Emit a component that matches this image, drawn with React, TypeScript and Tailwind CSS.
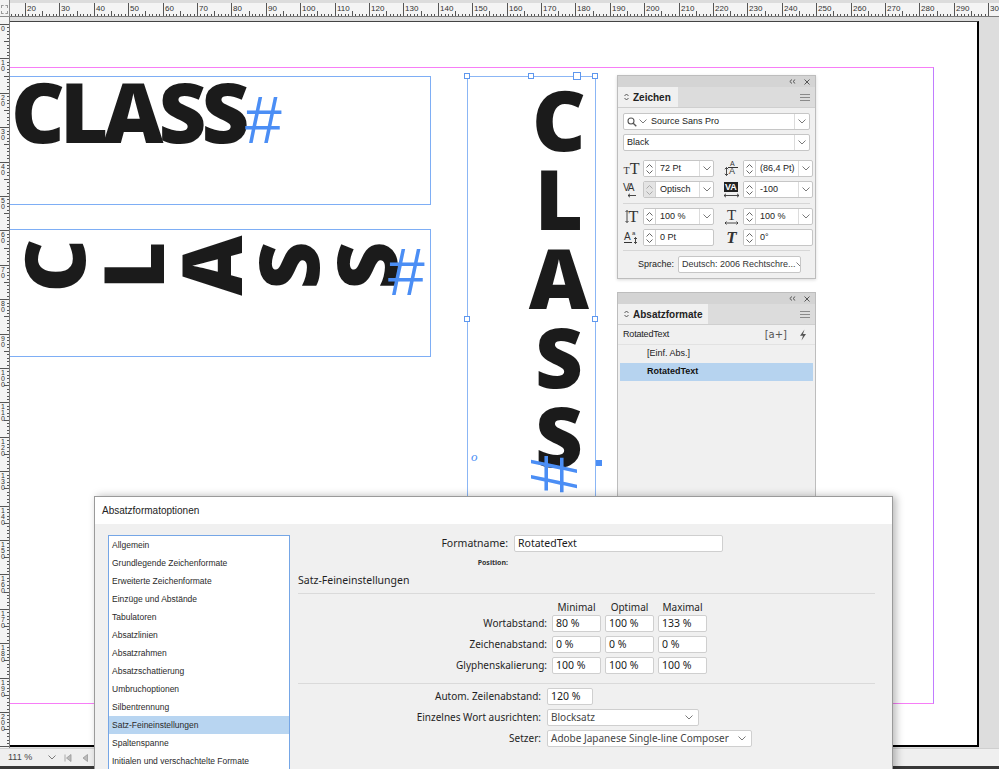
import React from "react";

const H_TICKS = Array.from({ length: 301 }, (_, v) => v).filter((v) => -53.8 + v * 3.44 > -1);
const V_TICKS = Array.from({ length: 215 }, (_, v) => v);

function Chevron({ className = "" }: { className?: string }) {
  return (
    <svg width="8" height="5" viewBox="0 0 8 5" className={`shrink-0 ${className}`}>
      <path d="M0.5 0.5 L4 4 L7.5 0.5" fill="none" stroke="#7a7a7a" strokeWidth="1" />
    </svg>
  );
}

function TopRuler() {
  return (
    <div className="flex h-[17px] shrink-0 bg-[#dcdcdc]">
      <div className="h-full w-[10px] border-r border-b border-[#8a8a8a] bg-[#f2f2f2] pt-[5px]">
        <div className="mx-[1px] h-[9px] border border-dashed border-[#9a9a9a]" />
      </div>
      <div className="relative mt-[3px] flex-1 overflow-hidden border-b border-[#7a7a7a] bg-[#f4f4f4]">
        <svg width="989" height="13" className="absolute left-0 top-0">
          {H_TICKS.map((v) => {
            const x = Math.round(-53.8 + v * 3.44) + 0.5;
            const h = v % 10 === 0 ? 13 : v % 5 === 0 ? 5 : 2;
            return <line key={v} x1={x} x2={x} y1={13 - h} y2={13} stroke="#555" strokeWidth="1" />;
          })}
        </svg>
        {H_TICKS.filter((v) => v % 10 === 0).map((v) => (
          <span
            key={v}
            className="absolute top-[1px] text-[8px] leading-[9px] text-[#333]"
            style={{ left: Math.round(-53.8 + v * 3.44) + 2 }}
          >
            {v}
          </span>
        ))}
      </div>
    </div>
  );
}

function LeftRuler() {
  return (
    <div className="relative w-[10px] shrink-0 overflow-hidden border-r border-[#7a7a7a] bg-[#f4f4f4]">
      <svg width="10" height="731" className="absolute left-0 top-0">
        {V_TICKS.map((v) => {
          const y = Math.round(7 + v * 3.44) + 0.5;
          const w = v % 10 === 0 ? 9 : v % 5 === 0 ? 5 : 2;
          return <line key={v} x1={9 - w} x2={9} y1={y} y2={y} stroke="#555" strokeWidth="1" />;
        })}
      </svg>
      {V_TICKS.filter((v) => v % 10 === 0).map((v) => (
        <div
          key={v}
          className="absolute left-[1px] flex flex-col text-[7px] leading-[6px] text-[#333]"
          style={{ top: Math.round(7 + v * 3.44) + 2 }}
        >
          {String(v)
            .split("")
            .map((d, i) => (
              <span key={i}>{d}</span>
            ))}
        </div>
      ))}
    </div>
  );
}

function Handle({ className }: { className: string }) {
  return <div className={`absolute border border-[#5e97ee] bg-white ${className}`} />;
}

function Page() {
  const big = "font-['Open_Sans',sans-serif] font-extrabold text-[83px] text-[#1b1b1b]";
  const hash = "font-['Liberation_Sans',Arial,sans-serif] text-[66px] leading-none text-[#4b8ef5]";
  return (
    <div className="relative mt-[4px] h-[726px] w-[969px] overflow-hidden border-t border-r-2 border-b-2 border-t-[#444] border-r-black border-b-black bg-white">
      {/* margin guides */}
      <div className="absolute left-[-10px] top-[45px] h-[637px] w-[934px] border-t border-b border-r border-t-[#f77df7] border-b-[#f77df7] border-r-[#c07cff]" />

      {/* frame 1 */}
      <div className="absolute left-[-10px] top-[54px] h-[129px] w-[431px] border border-[#7eaef5]">
        <span className={`absolute left-[10px] top-[-8px] leading-none tracking-[-0.06em] ${big}`}>CLASS</span>
        <span className={`absolute left-[244px] top-[10px] ${hash}`}>#</span>
      </div>

      {/* frame 2 */}
      <div className="absolute left-[-10px] top-[207px] h-[128px] w-[431px] border border-[#7eaef5]">
        <div className="absolute left-[13px] top-[-4px] flex">
          {["C", "L", "A", "S", "S"].map((c, i) => (
            <div key={i} className="flex h-[78px] w-[78px] items-center justify-center">
              <span className={`inline-block -rotate-90 leading-[83px] ${big}`}>{c}</span>
            </div>
          ))}
        </div>
        <span className={`absolute left-[387px] top-[9px] ${hash}`}>#</span>
      </div>

      {/* frame 3 (selected) */}
      <div className="absolute left-[457px] top-[54px] h-[520px] w-[129px] border border-[#8bb6f5]">
        <div className="absolute left-[52px] top-[2px] flex w-[78px] flex-col items-center">
          {["C", "L", "A", "S", "S"].map((c, i) => (
            <span key={i} className={`leading-[79px] ${big}`}>
              {c}
            </span>
          ))}
        </div>
        <span className={`absolute left-[68px] top-[364px] inline-block rotate-90 ${hash}`}>#</span>
        <span className="absolute left-[3px] top-[373px] font-['Liberation_Serif',serif] text-[13px] italic leading-none text-[#4b8ef5]">
          o
        </span>
        <div className="absolute left-[128px] top-[383px] h-[6px] w-[6px] bg-[#4b8ef5]" />
      </div>
      <Handle className="left-[454px] top-[51px] h-[6px] w-[6px]" />
      <Handle className="left-[518px] top-[51px] h-[6px] w-[6px]" />
      <Handle className="left-[563px] top-[50px] h-[8px] w-[8px]" />
      <Handle className="left-[582px] top-[51px] h-[6px] w-[6px]" />
      <Handle className="left-[454px] top-[294px] h-[6px] w-[6px]" />
      <Handle className="left-[582px] top-[294px] h-[6px] w-[6px]" />
    </div>
  );
}

function PanelHeader() {
  return (
    <div className="flex h-[11px] items-center justify-end gap-[8px] bg-[#d4d4d4] pr-[5px]">
      <svg width="7" height="5" viewBox="0 0 7 5">
        <path d="M3 0.5 L0.8 2.5 L3 4.5 M6.2 0.5 L4 2.5 L6.2 4.5" fill="none" stroke="#555" strokeWidth="1" />
      </svg>
      <svg width="6" height="6" viewBox="0 0 6 6">
        <path d="M0.5 0.5 L5.5 5.5 M5.5 0.5 L0.5 5.5" stroke="#555" strokeWidth="1" />
      </svg>
    </div>
  );
}

function UpDown() {
  return (
    <svg width="5" height="8" viewBox="0 0 5 8">
      <path d="M0.5 3 L2.5 1 L4.5 3 M0.5 5 L2.5 7 L4.5 5" fill="none" stroke="#444" strokeWidth="0.9" />
    </svg>
  );
}

function Hamburger() {
  return (
    <div className="flex w-[10px] flex-col gap-[2px]">
      <div className="h-px bg-[#8a8a8a]" />
      <div className="h-px bg-[#8a8a8a]" />
      <div className="h-px bg-[#8a8a8a]" />
    </div>
  );
}

function PanelTabs({ title, tabW }: { title: string; tabW: string }) {
  return (
    <div className="flex h-[21px] items-stretch border-b border-[#cfcfcf] bg-[#dcdcdc]">
      <div className={`flex items-center gap-[4px] bg-[#f0f0f0] pl-[6px] ${tabW}`}>
        <UpDown />
        <span className="text-[10px] font-bold text-[#222]">{title}</span>
      </div>
      <div className="flex flex-1 items-center justify-end pr-[5px]">
        <Hamburger />
      </div>
    </div>
  );
}

function Spinner({ disabled = false }: { disabled?: boolean }) {
  return (
    <div
      className={`flex h-full w-[12px] shrink-0 flex-col items-center justify-center gap-[2px] border-r border-[#d2d2d2] ${
        disabled ? "bg-[#e4e4e4]" : "bg-white"
      }`}
    >
      <svg width="7" height="4" viewBox="0 0 7 4">
        <path d="M0.5 3.5 L3.5 0.5 L6.5 3.5" fill="none" stroke={disabled ? "#aaa" : "#666"} />
      </svg>
      <svg width="7" height="4" viewBox="0 0 7 4">
        <path d="M0.5 0.5 L3.5 3.5 L6.5 0.5" fill="none" stroke={disabled ? "#aaa" : "#666"} />
      </svg>
    </div>
  );
}

function SpinField({
  value,
  className,
  chevron = true,
  disabled = false,
}: {
  value: string;
  className: string;
  chevron?: boolean;
  disabled?: boolean;
}) {
  return (
    <div className={`flex h-[17px] shrink-0 overflow-hidden rounded-[2px] border border-[#c6c6c6] bg-white ${className}`}>
      <Spinner disabled={disabled} />
      <span className="flex flex-1 items-center whitespace-nowrap pl-[4px] text-[9px] text-[#222]">{value}</span>
      {chevron && (
        <span className="flex w-[14px] items-center justify-center border-l border-[#dcdcdc]">
          <Chevron />
        </span>
      )}
    </div>
  );
}

function Icon({ children }: { children: React.ReactNode }) {
  return <div className="flex h-[17px] w-[17px] shrink-0 items-center justify-center text-[#333]">{children}</div>;
}

function ZeichenPanel() {
  const serif = "font-['Liberation_Serif',serif]";
  return (
    <div className="absolute left-[617px] top-[75px] h-[204px] w-[199px] border border-[#bdbdbd] bg-[#f0f0f0] shadow-[0_1px_3px_rgba(0,0,0,0.15)]">
      <PanelHeader />
      <PanelTabs title="Zeichen" tabW="w-[60px]" />
      <div className="px-[5px] pt-[5px]">
        <div className="flex h-[17px] overflow-hidden rounded-[2px] border border-[#c6c6c6] bg-white">
          <span className="flex flex-1 items-center gap-[2px] pl-[3px] text-[9px] text-[#222]">
            <svg width="10" height="10" viewBox="0 0 10 10">
              <circle cx="4" cy="4" r="3" fill="none" stroke="#555" strokeWidth="1.1" />
              <path d="M6.2 6.2 L9.3 9.3" stroke="#555" strokeWidth="1.3" />
            </svg>
            <Chevron className="mr-[2px]" />
            Source Sans Pro
          </span>
          <span className="flex w-[15px] items-center justify-center border-l border-[#dcdcdc]">
            <Chevron />
          </span>
        </div>
        <div className="mt-[4px] flex h-[17px] overflow-hidden rounded-[2px] border border-[#c6c6c6] bg-white">
          <span className="flex flex-1 items-center pl-[3px] text-[9px] text-[#222]">Black</span>
          <span className="flex w-[15px] items-center justify-center border-l border-[#dcdcdc]">
            <Chevron />
          </span>
        </div>

        <div className="mt-[9px] flex flex-col gap-[4px]">
          <div className="flex items-center">
            <Icon>
              <span className={`${serif} leading-none`}>
                <span className="text-[10px]">T</span>
                <span className="text-[16px]">T</span>
              </span>
            </Icon>
            <SpinField value="72 Pt" className="ml-[3px] w-[71px]" />
            <div className="ml-[9px]">
              <Icon>
                <div className="relative h-[17px] w-[17px]">
                  <span className="absolute left-[7px] top-[0px] text-[7px] leading-none">A</span>
                  <span className="absolute left-[6px] top-[7px] text-[9px] leading-none">A</span>
                  <div className="absolute left-[5px] top-[7px] h-px w-[10px] bg-[#333]" />
                  <svg width="5" height="9" viewBox="0 0 5 9" className="absolute left-[1px] top-[7px]">
                    <path d="M2.5 0.5 V8.5 M0.8 2.2 L2.5 0.5 L4.2 2.2 M0.8 6.8 L2.5 8.5 L4.2 6.8" fill="none" stroke="#333" strokeWidth="0.9" />
                  </svg>
                </div>
              </Icon>
            </div>
            <SpinField value="(86,4 Pt)" className="ml-[3px] w-[70px]" />
          </div>
          <div className="flex items-center">
            <Icon>
              <div className="relative h-[17px] w-[17px]">
                <span className="absolute left-[0px] top-[2px] text-[10px] leading-none tracking-[-0.12em]">VA</span>
                <svg width="10" height="5" viewBox="0 0 10 5" className="absolute left-[4px] top-[12px]">
                  <path d="M9 2.5 H1 M3 0.8 L1 2.5 L3 4.2" fill="none" stroke="#333" strokeWidth="0.9" />
                </svg>
              </div>
            </Icon>
            <SpinField value="Optisch" className="ml-[3px] w-[71px]" disabled />
            <div className="ml-[9px]">
              <Icon>
                <div className="relative h-[17px] w-[17px]">
                  <span className="absolute left-[1px] top-[1px] bg-[#222] px-[1px] text-[9px] font-bold leading-[10px] text-white">VA</span>
                  <svg width="17" height="5" viewBox="0 0 17 5" className="absolute left-0 top-[12px]">
                    <path d="M1 2.5 H16 M3 0.8 L1 2.5 L3 4.2 M14 0.8 L16 2.5 L14 4.2" fill="none" stroke="#333" strokeWidth="0.9" />
                  </svg>
                </div>
              </Icon>
            </div>
            <SpinField value="-100" className="ml-[3px] w-[70px]" />
          </div>
        </div>

        <div className="mt-[5px] h-px bg-[#d6d6d6]" />

        <div className="mt-[4px] flex flex-col gap-[4px]">
          <div className="flex items-center">
            <Icon>
              <div className="flex items-center">
                <svg width="4" height="13" viewBox="0 0 4 13">
                  <path d="M2 0.5 V12.5 M0.5 2 L2 0.5 L3.5 2 M0.5 11 L2 12.5 L3.5 11" fill="none" stroke="#333" strokeWidth="0.9" />
                </svg>
                <span className={`${serif} text-[16px] leading-none`}>T</span>
              </div>
            </Icon>
            <SpinField value="100 %" className="ml-[3px] w-[71px]" />
            <div className="ml-[9px]">
              <Icon>
                <div className="flex flex-col items-center">
                  <span className={`${serif} text-[15px] leading-[12px]`}>T</span>
                  <svg width="15" height="4" viewBox="0 0 15 4">
                    <path d="M1 2 H14 M2.5 0.5 L1 2 L2.5 3.5 M12.5 0.5 L14 2 L12.5 3.5" fill="none" stroke="#333" strokeWidth="0.9" />
                  </svg>
                </div>
              </Icon>
            </div>
            <SpinField value="100 %" className="ml-[3px] w-[70px]" />
          </div>
          <div className="flex items-center">
            <Icon>
              <div className="relative h-[17px] w-[17px]">
                <span className="absolute left-[1px] top-[3px] text-[10px] leading-none">A</span>
                <span className="absolute left-[9px] top-[1px] text-[6px] leading-none">a</span>
                <div className="absolute left-[1px] top-[13px] h-px w-[8px] bg-[#333]" />
                <svg width="5" height="7" viewBox="0 0 5 7" className="absolute left-[10px] top-[8px]">
                  <path d="M2.5 0.5 V6.5 M1 2 L2.5 0.5 L4 2 M1 5 L2.5 6.5 L4 5" fill="none" stroke="#333" strokeWidth="0.9" />
                </svg>
              </div>
            </Icon>
            <SpinField value="0 Pt" className="ml-[3px] w-[71px]" chevron={false} />
            <div className="ml-[9px]">
              <Icon>
                <span className={`${serif} text-[17px] font-bold italic leading-none`}>T</span>
              </Icon>
            </div>
            <SpinField value="0°" className="ml-[3px] w-[70px]" chevron={false} />
          </div>
        </div>

        <div className="mt-[4px] h-px bg-[#d6d6d6]" />

        <div className="mt-[5px] flex items-center">
          <span className="ml-[15px] w-[39px] text-[9px] text-[#222]">Sprache:</span>
          <div className="ml-[1px] flex h-[17px] w-[123px] items-center justify-between overflow-hidden rounded-[2px] border border-[#c6c6c6] bg-white pl-[3px] pr-[5px]">
            <span className="whitespace-nowrap text-[9px] text-[#333]">Deutsch: 2006 Rechtschre...</span>
            <Chevron />
          </div>
        </div>
      </div>
    </div>
  );
}

function AbsatzPanel() {
  return (
    <div className="absolute left-[617px] top-[292px] h-[206px] w-[199px] border border-[#bdbdbd] bg-[#f0f0f0]">
      <PanelHeader />
      <PanelTabs title="Absatzformate" tabW="w-[90px]" />
      <div className="flex h-[20px] items-center justify-between border-b border-[#e2e2e2] pl-[5px] pr-[8px]">
        <span className="text-[9px] tracking-[-0.02em] text-[#222]">RotatedText</span>
        <div className="flex items-center gap-[12px]">
          <span className="font-['DejaVu_Sans',sans-serif] text-[10px] text-[#555]">[a+]</span>
          <svg width="8" height="12" viewBox="0 0 8 12">
            <path d="M5.5 0.5 L1 6.8 H4 L2.5 11.5 L7 5 H4 Z" fill="#555" />
          </svg>
        </div>
      </div>
      <div className="flex h-[18px] items-center pl-[29px] text-[9px] text-[#222]">[Einf. Abs.]</div>
      <div className="mx-[2px] flex h-[18px] items-center bg-[#b6d3ef] pl-[27px] text-[9px] font-bold text-[#111]">
        RotatedText
      </div>
    </div>
  );
}

const LIST = [
  "Allgemein",
  "Grundlegende Zeichenformate",
  "Erweiterte Zeichenformate",
  "Einzüge und Abstände",
  "Tabulatoren",
  "Absatzlinien",
  "Absatzrahmen",
  "Absatzschattierung",
  "Umbruchoptionen",
  "Silbentrennung",
  "Satz-Feineinstellungen",
  "Spaltenspanne",
  "Initialen und verschachtelte Formate",
];

function Input({ value, className }: { value: string; className: string }) {
  return (
    <div className={`flex h-[17px] shrink-0 items-center whitespace-nowrap rounded-[2px] border border-[#cfcfcf] bg-white pl-[3px] text-[10.5px] text-[#1a1a1a] ${className}`}>
      {value}
    </div>
  );
}

function Select({ value, className }: { value: string; className: string }) {
  return (
    <div className={`flex h-[17px] shrink-0 items-center justify-between overflow-hidden rounded-[2px] border border-[#cfcfcf] bg-white pl-[3px] pr-[5px] text-[10px] text-[#444] ${className}`}>
      <span className="whitespace-nowrap">{value}</span>
      <Chevron />
    </div>
  );
}

function Dialog() {
  const rows: [string, string, string, string][] = [
    ["Wortabstand:", "80 %", "100 %", "133 %"],
    ["Zeichenabstand:", "0 %", "0 %", "0 %"],
    ["Glyphenskalierung:", "100 %", "100 %", "100 %"],
  ];
  return (
    <div className="absolute left-[94px] top-[496px] h-[290px] w-[799px] border border-[#9a9a9a] bg-[#f0f0f0] shadow-[3px_0_8px_rgba(0,0,0,0.28)]">
      <div className="flex h-[27px] items-center bg-white pl-[7px] text-[10px] text-[#222]">Absatzformatoptionen</div>
      <div className="flex pl-[13px] pt-[11px]">
        <div className="h-[260px] w-[182px] shrink-0 border border-[#75a6e6] bg-white">
          {LIST.map((item, i) => (
            <div
              key={item}
              className={`flex h-[18px] items-center pl-[3px] text-[8.5px] text-[#2a2a2a] ${i === 10 ? "bg-[#b8d5f1]" : ""}`}
            >
              {item}
            </div>
          ))}
        </div>

        <div className="ml-[8px] w-[577px] font-['Noto_Sans',sans-serif] text-[10px] text-[#1f1f1f]">
          <div className="flex items-center">
            <span className="w-[210px] text-right text-[10.5px]">Formatname:</span>
            <Input value="RotatedText" className="ml-[6px] w-[209px]" />
          </div>
          <div className="mt-[3px] flex h-[16px] items-center">
            <span className="w-[210px] text-right text-[7px] font-bold text-[#333]">Position:</span>
          </div>
          <div className="mt-[2px] flex h-[16px] items-center text-[10.5px]">Satz-Feineinstellungen</div>
          <div className="mt-[4px] h-px bg-[#dadada]" />

          <div className="mt-[7px] flex h-[13px] items-center">
            <span className="w-[254px]" />
            <span className="w-[49px] text-center">Minimal</span>
            <span className="ml-[4px] w-[49px] text-center">Optimal</span>
            <span className="ml-[4px] w-[49px] text-center">Maximal</span>
          </div>
          <div className="mt-[1px] flex flex-col gap-[4px]">
            {rows.map(([label, a, b, c]) => (
              <div key={label} className="flex items-center">
                <span className="w-[249px] text-right">{label}</span>
                <Input value={a} className="ml-[5px] w-[49px]" />
                <Input value={b} className="ml-[4px] w-[49px]" />
                <Input value={c} className="ml-[4px] w-[49px]" />
              </div>
            ))}
          </div>
          <div className="mt-[9px] h-px bg-[#dadada]" />

          <div className="mt-[4px] flex flex-col gap-[4px]">
            <div className="flex items-center">
              <span className="w-[243px] text-right">Autom. Zeilenabstand:</span>
              <Input value="120 %" className="ml-[6px] w-[46px]" />
            </div>
            <div className="flex items-center">
              <span className="w-[243px] text-right">Einzelnes Wort ausrichten:</span>
              <Select value="Blocksatz" className="ml-[6px] w-[152px]" />
            </div>
            <div className="flex items-center">
              <span className="w-[243px] text-right">Setzer:</span>
              <Select value="Adobe Japanese Single-line Composer" className="ml-[6px] w-[205px]" />
            </div>
          </div>
        </div>
      </div>
    </div>
  );
}

function StatusBar() {
  return (
    <div className="flex h-[18px] shrink-0 items-center border-t border-[#cfcfcf] bg-[#efefef] pl-[8px] text-[9px] text-[#444]">
      <span>111 %</span>
      <Chevron className="ml-[16px]" />
      <svg width="8" height="8" viewBox="0 0 8 8" className="ml-[8px]">
        <path d="M1 0.5 V7.5 M7 0.5 L2.5 4 L7 7.5 Z" fill="#bbb" stroke="#999" strokeWidth="0.8" />
      </svg>
      <svg width="6" height="8" viewBox="0 0 6 8" className="ml-[10px]">
        <path d="M5.5 0.5 L1 4 L5.5 7.5 Z" fill="#bbb" stroke="#999" strokeWidth="0.8" />
      </svg>
      <div className="ml-[6px] h-[14px] w-px bg-[#c8c8c8]" />
    </div>
  );
}

export default function App() {
  return (
    <div className="relative h-[769px] w-[999px] overflow-hidden bg-[#dadada] font-['Liberation_Sans',Arial,sans-serif]">
      <div className="flex h-full flex-col">
        <TopRuler />
        <div className="flex min-h-0 flex-1">
          <LeftRuler />
          <div className="relative flex-1 overflow-hidden bg-[#dddddd]">
            <Page />
          </div>
        </div>
        <StatusBar />
        <div className="h-[3px] shrink-0 bg-[#383838]" />
      </div>
      <ZeichenPanel />
      <AbsatzPanel />
      <Dialog />
    </div>
  );
}
